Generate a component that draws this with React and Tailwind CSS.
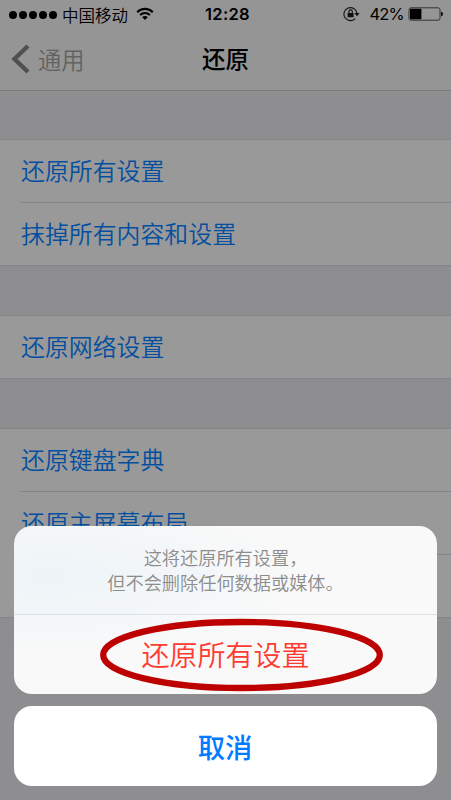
import React from 'react';

const groups = [
  ['还原所有设置', '抹掉所有内容和设置'],
  ['还原网络设置'],
  ['还原键盘字典', '还原主屏幕布局', '还原位置与隐私'],
];

const WifiIcon = () => (
  <svg width="18" height="14" viewBox="0 0 18 14" className="ml-[8px] mb-[1px]" fill="none" stroke="#000" strokeWidth="2.1">
    <path d="M1.2 5.2C5.5.7 12.5.7 16.8 5.2" />
    <path d="M4.1 8.1c2.8-2.8 7-2.8 9.8 0" />
    <path d="M6.2 10.2c1.6-1.5 4-1.5 5.6 0L9 13.1z" fill="#000" stroke="none" />
  </svg>
);

const RotationLockIcon = () => (
  <svg width="17" height="16" viewBox="0 0 17 16" className="mb-[1px]" fill="none" stroke="#111" strokeWidth="1.1">
    <path d="M12.2 12.6A6.5 6.5 0 1 1 13.9 7.2" />
    <path d="M11.4 7h5.2l-2.6 3.2z" fill="#111" stroke="none" />
    <rect x="4.6" y="6.9" width="6" height="4.4" rx="0.6" fill="#111" stroke="none" />
    <path d="M5.9 7V5.600a1.7 1.7 0 0 1 3.4 0V7" />
  </svg>
);

const BatteryIcon = () => (
  <svg width="36" height="14" viewBox="0 0 36 14" className="ml-[4px] mb-[1px]">
    <rect x="1" y="0.8" width="31" height="12.4" rx="2" fill="none" stroke="#333" strokeWidth="1" />
    <rect x="2" y="1.8" width="11.4" height="10.4" rx="0.8" fill="#000" />
    <path d="M33 4.8c1.3.2 2 1 2 2.2s-.7 2-2 2.2z" fill="#111" />
  </svg>
);

const StatusBar = () => (
  <div className="grid grid-cols-[1fr_auto_1fr] items-center h-[29px] text-black">
    <div className="flex items-center pl-[9px]">
      <div className="flex gap-[2px]">
        {[0, 1, 2, 3, 4].map((dot) => (
          <span key={dot} className="w-[8px] h-[8px] rounded-full bg-black" />
        ))}
      </div>
      <span className="ml-[5px] text-[16.5px] leading-[28px] font-[350]">中国移动</span>
      <WifiIcon />
    </div>
    <span className="pl-[4px] font-['Inter'] font-semibold text-[16.5px] tracking-[0.3px]">12:28</span>
    <div className="flex items-center justify-end pr-[7px]">
      <RotationLockIcon />
      <span className="ml-[9px] font-['Inter'] text-[16.5px] tracking-[-0.8px]">42%</span>
      <BatteryIcon />
    </div>
  </div>
);

const NavBar = () => (
  <div className="grid grid-cols-[1fr_auto_1fr] items-center h-[60px]">
    <div className="flex items-center pl-[11px] text-[#626262]">
      <svg width="19" height="30" viewBox="0 0 19 30" fill="none" stroke="#505050" strokeWidth="4.4">
        <path d="M17 2L3.5 15L17 28" />
      </svg>
      <span className="ml-[8px] text-[23.3px] font-[350]">通用</span>
    </div>
    <h1 className="text-[23.5px] font-medium text-black">还原</h1>
  </div>
);

const SettingsGroup = ({ items }) => (
  <div className="border-y border-[#858587] bg-[#999999]">
    {items.map((item, index) => (
      <div key={item} className="pl-[21px]">
        <div
          className={
            index > 0
              ? 'h-[63px] pb-[2px] flex items-center border-t border-[#858587] text-[23.9px] font-[350] text-[#034f9f]'
              : 'h-[62px] pb-[2px] flex items-center text-[23.9px] font-[350] text-[#034f9f]'
          }
        >
          {item}
        </div>
      </div>
    ))}
  </div>
);

const ActionSheet = () => (
  <div className="absolute left-[14px] top-[526px] w-[423px] flex flex-col gap-[12px] text-center">
    <div className="h-[168px] rounded-[18px] bg-[#f9f9f9] bg-[radial-gradient(ellipse_at_8%_30%,#edf4f8_0%,#f9f9f9_48%)]">
      <div className="h-[89px] pt-[19px] border-b border-[#d9e0e8] text-[18.2px] leading-[25px] font-[350] text-[#8c8c8c]">
        <p>这将还原所有设置，</p>
        <p>但不会删除任何数据或媒体。</p>
      </div>
      <button className="w-full h-[79px] pb-[1px] text-[28px] font-[350] text-[#ff3b30]">还原所有设置</button>
    </div>
    <button className="h-[80px] pr-[1px] rounded-[18px] bg-white text-[27.3px] font-medium text-[#007aff]">取消</button>
    {/* Hand-drawn highlight around the reset action */}
    <svg className="absolute left-[86px] top-[92px] pointer-events-none" width="284" height="74" viewBox="0 0 284 74">
      <ellipse cx="141.5" cy="37" rx="138.3" ry="33" fill="none" stroke="#bd0000" strokeWidth="6.3" />
    </svg>
  </div>
);

const App = () => {
  return (
    <div className="relative w-[451px] h-[800px] overflow-hidden bg-[#8e8e90] font-['Noto_Sans_CJK_SC',sans-serif]">
      <div className="h-[91px] bg-[#959595] border-b border-[#7b7b7c]">
        <StatusBar />
        <NavBar />
      </div>
      <div className="pt-[48px] flex flex-col gap-[49px]">
        {groups.map((items) => (
          <SettingsGroup key={items[0]} items={items} />
        ))}
      </div>
      <ActionSheet />
    </div>
  );
};

export default App;
